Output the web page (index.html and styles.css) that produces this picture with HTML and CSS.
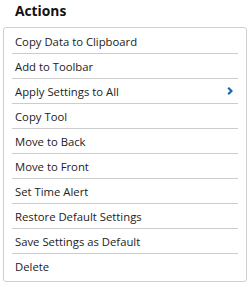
FILE: index.html
```html
<!DOCTYPE html>
<html>
<head>
<meta charset="utf-8">
<link rel="stylesheet" href="styles.css">
</head>
<body>
<div class="title">Actions</div>
<div class="panel">
  <ul class="menu">
    <li class="item">Copy Data to Clipboard</li>
    <li class="item">Add to Toolbar</li>
    <li class="item has-sub">Apply Settings to All
      <svg class="chev" width="6" height="8" viewBox="0 0 6 8"><path d="M1.2 0.8 L4.5 4 L1.2 7.2" fill="none" stroke="#1565b0" stroke-width="2.2"/></svg>
    </li>
    <li class="item">Copy Tool</li>
    <li class="item">Move to Back</li>
    <li class="item">Move to Front</li>
    <li class="item">Set Time Alert</li>
    <li class="item">Restore Default Settings</li>
    <li class="item">Save Settings as Default</li>
    <li class="item last">Delete</li>
  </ul>
</div>
</body>
</html>
```
FILE: styles.css
```css
html, body {
  margin: 0;
  padding: 0;
  background: #fff;
}
body {
  font-family: "Open Sans", "Liberation Sans", sans-serif;
  color: #222;
  width: 250px;
}
.title {
  font-weight: 700;
  font-size: 13.8px;
  line-height: 20px;
  padding: 1px 0 0 15px;
  height: 27px;
  box-sizing: border-box;
  color: #111;
}
.panel {
  margin-left: 3px;
  width: 244px;
  height: 255px;
  box-sizing: border-box;
  border: 1px solid #cfcfcf;
  border-radius: 3px;
  padding: 1px 8px 0 8px;
}
.menu {
  list-style: none;
  margin: 0;
  padding: 0;
}
.item {
  display: flex;
  align-items: center;
  justify-content: space-between;
  height: 25px;
  box-sizing: border-box;
  border-bottom: 1px solid #cccccc;
  font-size: 11.3px;
  padding: 0 5px 0 3px;
}
.item.last {
  border-bottom: none;
}
.chev {
  display: block;
}
```
